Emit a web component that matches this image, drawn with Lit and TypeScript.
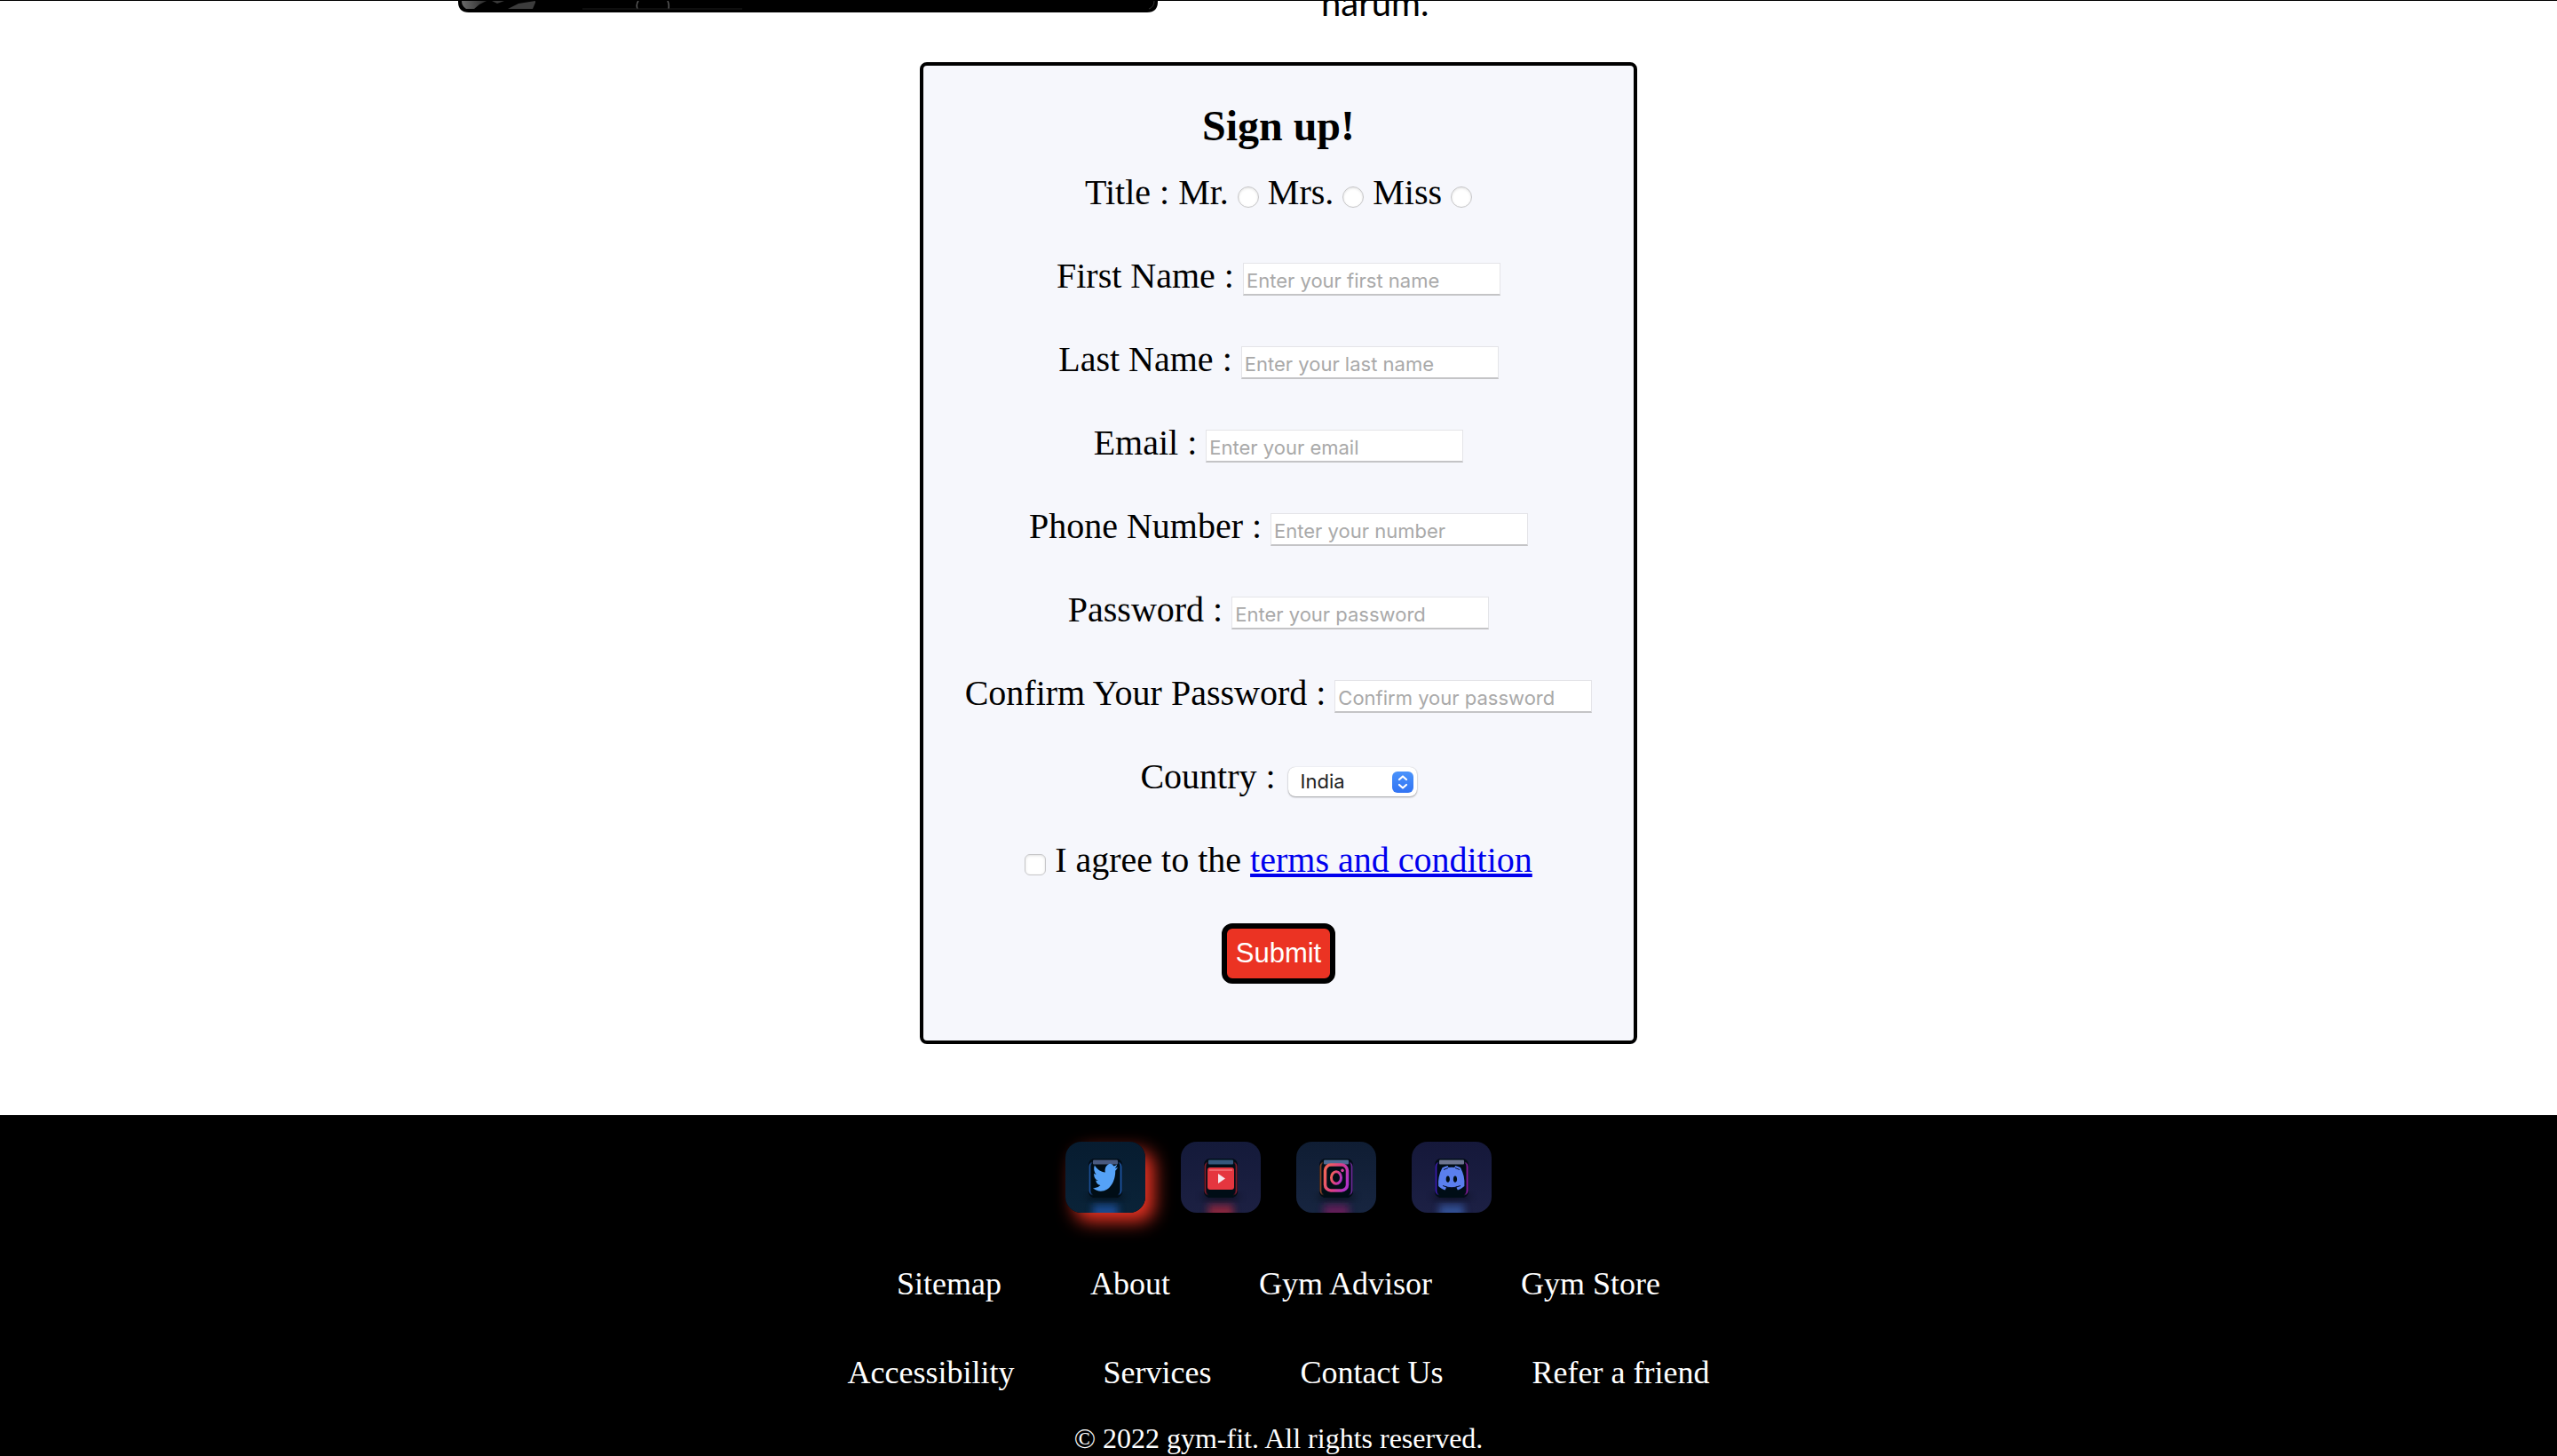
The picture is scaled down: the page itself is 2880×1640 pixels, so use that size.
import { LitElement, html, svg, css } from "lit";
import { customElement, property } from "lit/decorators.js";

interface Field {
  id: string;
  label: string;
  type: string;
  placeholder: string;
}

const FIELDS: Field[] = [
  { id: "first-name", label: "First Name :", type: "text", placeholder: "Enter your first name" },
  { id: "last-name", label: "Last Name :", type: "text", placeholder: "Enter your last name" },
  { id: "email", label: "Email :", type: "email", placeholder: "Enter your email" },
  { id: "phone", label: "Phone Number :", type: "tel", placeholder: "Enter your number" },
  { id: "password", label: "Password :", type: "password", placeholder: "Enter your password" },
  { id: "confirm", label: "Confirm Your Password :", type: "password", placeholder: "Confirm your password" },
];

const TITLES = ["Mr.", "Mrs.", "Miss"];

const LINK_ROWS = [
  ["Sitemap", "About", "Gym Advisor", "Gym Store"],
  ["Accessibility", "Services", "Contact Us", "Refer a friend"],
];

interface Tile {
  name: string;
  top: string;
  bottom: string;
  edgeLeft: string;
  edgeRight: string;
  glow: string;
  glass: string;
}

const TILES: Tile[] = [
  { name: "Twitter", top: "#071c30", bottom: "#0a2338", edgeLeft: "#1c4f96", edgeRight: "#1f57a5", glow: "#1d4f9a", glass: "#4a5a80" },
  { name: "YouTube", top: "#141a3a", bottom: "#1c2042", edgeLeft: "#7d1a2c", edgeRight: "#7d1a2c", glow: "#94263c", glass: "#34587c" },
  { name: "Instagram", top: "#0f1d33", bottom: "#172540", edgeLeft: "#8a4426", edgeRight: "#6a2a96", glow: "#6b1d5c", glass: "#4d6a92" },
  { name: "Discord", top: "#15183a", bottom: "#1c2044", edgeLeft: "#3d1fb0", edgeRight: "#8a1fa0", glow: "#34559c", glass: "#6d7490" },
];

const GLYPHS: Record<string, unknown> = {
  Twitter: svg`<path fill="#55a2f7" transform="translate(31 21.5) scale(1.17 1.57)"
    d="M23.95 4.57a10 10 0 0 1-2.82.78 4.96 4.96 0 0 0 2.16-2.73c-.95.56-2 .96-3.13 1.18a4.92 4.92 0 0 0-8.38 4.48C7.69 8.1 4.07 6.13 1.64 3.16a4.92 4.92 0 0 0 1.52 6.57 4.9 4.9 0 0 1-2.23-.61v.06a4.92 4.92 0 0 0 3.95 4.83 5 5 0 0 1-2.21.08 4.94 4.94 0 0 0 4.6 3.42A9.87 9.87 0 0 1 0 19.54a14 14 0 0 0 7.55 2.21c9.05 0 14-7.5 14-13.98 0-.21 0-.42-.02-.63a9.94 9.94 0 0 0 2.46-2.55z"/>`,
  YouTube: svg`
    <rect x="30" y="29" width="30" height="25" rx="3" fill="#e5363f"/>
    <rect x="32" y="31" width="26" height="2" fill="#f0656b"/>
    <path d="M42 36l8 5.5-8 5.5z" fill="#f6e6ec"/>`,
  Instagram: svg`
    <g fill="none" stroke="url(#insta)">
      <rect x="32.500" y="26" width="25" height="29" rx="6.500" stroke-width="3.500"/>
      <ellipse cx="45" cy="40.500" rx="5.500" ry="6.800" stroke-width="3"/>
    </g>
    <ellipse cx="52" cy="32.300" rx="1.700" ry="1.900" fill="#d6409c"/>`,
  Discord: svg`<path fill="#5a7fee" transform="translate(30 22.8) scale(1.24 1.5)"
    d="M20.320 4.370a19.800 19.800 0 0 0-4.890-1.520.07.07 0 0 0-.08.04c-.21.38-.44.86-.61 1.250a18.270 18.270 0 0 0-5.490 0c-.16-.39-.4-.87-.62-1.250a.08.08 0 0 0-.08-.04 19.740 19.740 0 0 0-4.880 1.520C.53 9.050-.32 13.580.1 18.060c1.800 1.320 3.800 2.400 5.990 3.030.5-.7.900-1.300 1.230-1.990a13.100 13.100 0 0 1-1.870-.9l.37-.29a14.200 14.200 0 0 0 12.120 0l.37.29c-.6.35-1.200.65-1.870.9.36.7.770 1.360 1.230 1.990a19.840 19.840 0 0 0 6.020-3.030c.5-5.180-.84-9.680-3.550-13.690zM8.700 15.330c-1 0-1.700-1.080-1.700-2.420 0-1.330.7-2.420 1.700-2.420s1.700 1.100 1.700 2.420c0 1.340-.7 2.420-1.700 2.420zm6.600 0c-1 0-1.700-1.080-1.700-2.420 0-1.330.7-2.420 1.700-2.420s1.700 1.100 1.700 2.420c0 1.340-.7 2.420-1.700 2.420z"/>
    <path d="M35 49.500q10 4.500 20 0M36 31.500l5-2M54 31.500l-5-2" fill="none" stroke="#0a1233" stroke-width="1"/>`,
};

@customElement("social-tile")
export class SocialTile extends LitElement {
  @property({ attribute: false }) tile!: Tile;

  static styles = css`
    :host { display: block; }
    .art { display: block; width: 90px; height: 80px; }
  `;

  render() {
    const t = this.tile;
    return html`<svg class="art" viewBox="0 0 90 80" aria-hidden="true">
      <defs>
        <linearGradient id="bg" x1="0" y1="0" x2="0" y2="1">
          <stop offset="0" stop-color=${t.top} /><stop offset="1" stop-color=${t.bottom} />
        </linearGradient>
        <linearGradient id="edge" x1="0" y1="0" x2="1" y2="0">
          <stop offset="0" stop-color=${t.edgeLeft} /><stop offset="0.1" stop-color="#030a16" />
          <stop offset="0.9" stop-color="#030a16" /><stop offset="1" stop-color=${t.edgeRight} />
        </linearGradient>
        <linearGradient id="insta" x1="0" y1="0.3" x2="1" y2="0.7">
          <stop offset="0" stop-color="#f0625a" /><stop offset="0.5" stop-color="#dc3f86" />
          <stop offset="1" stop-color="#b032c8" />
        </linearGradient>
        <filter id="soft" x="-60%" y="-60%" width="220%" height="220%"><feGaussianBlur stdDeviation="4" /></filter>
        <filter id="fine" x="-20%" y="-20%" width="140%" height="140%"><feGaussianBlur stdDeviation="0.6" /></filter>
      </defs>
      <rect width="90" height="80" fill="url(#bg)" />
      <rect x="31" y="71" width="28" height="18" fill=${t.glow} opacity="0.9" filter="url(#soft)" />
      <ellipse cx="45" cy="62" rx="22" ry="3" fill="#020611" opacity="0.7" filter="url(#soft)" />
      <rect x="26" y="19" width="38" height="44" rx="7" fill="#020812" filter="url(#fine)" />
      <rect x="27.500" y="23" width="35" height="37" rx="5" fill="none" stroke="url(#edge)" stroke-width="2" filter="url(#fine)" />
      <rect x="31" y="20.500" width="28" height="5" rx="1" fill=${t.glass} filter="url(#fine)" />
      ${GLYPHS[t.name]}
    </svg>`;
  }
}

@customElement("app-root")
export class AppRoot extends LitElement {
  static styles = css`
    :host {
      display: flex;
      flex-direction: column;
      min-height: 100vh;
      background: #fff;
      color: #000;
      font-family: "Liberation Serif", "Times New Roman", serif;
      font-size: 40px;
      line-height: 46px;
    }
    .intro {
      display: grid;
      grid-template-columns: 788px 876px;
      justify-content: center;
      column-gap: 184px;
      height: 30px;
      border-top: 1px solid #000;
      overflow: hidden;
      box-sizing: border-box;
    }
    .photo { display: block; width: 100%; height: 13px; }
    .copy {
      display: flex;
      align-items: flex-end;
      height: 24px;
      margin: 0;
      font-family: Lato, sans-serif;
      line-height: 44px;
    }
    .signup {
      box-sizing: border-box;
      width: fit-content;
      margin: 40px auto 80px;
      padding: 40px 47px 64px;
      background: #f6f7fc;
      border: 4px solid #000;
      border-radius: 8px;
      text-align: center;
    }
    .heading { margin: 0; font-size: 48px; line-height: 56px; font-weight: 700; }
    .row { margin: 0 0 48px; padding: 0; border: 0; }
    .heading + .row { margin-top: 24px; }
    .text {
      box-sizing: border-box;
      width: 290px;
      height: 37px;
      padding: 4px 3px 0;
      border: 1px solid #e4e4e8;
      border-bottom: 2px solid #c4c4c6;
      border-radius: 0;
      background: #fff;
      font: 22px/30px Inter, sans-serif;
      color: #000;
    }
    .text::placeholder { color: #a9a9a9; opacity: 1; }
    .tick {
      appearance: none;
      box-sizing: border-box;
      width: 24px;
      height: 24px;
      margin: 0;
      border: 1px solid #c6c6c8;
      background: #fff;
      box-shadow: inset 0 1px 3px rgba(0, 0, 0, 0.12);
      vertical-align: -4px;
    }
    .tick[type="radio"] { border-radius: 50%; }
    .tick[type="checkbox"] { border-radius: 6px; }
    .picker { position: relative; display: inline-flex; margin-left: 4px; }
    .select {
      appearance: none;
      box-sizing: border-box;
      width: 145px;
      height: 33px;
      padding: 0 40px 0 14px;
      border: 0;
      border-radius: 8px;
      background: #fff;
      box-shadow: 0 1px 2px rgba(0, 0, 0, 0.35), 0 0 1px rgba(0, 0, 0, 0.2);
      font: 22px/33px Inter, sans-serif;
      color: #222;
    }
    .arrows { position: absolute; right: 4px; top: 50%; margin-top: -12px; width: 24px; height: 24px; pointer-events: none; }
    .terms { color: #0000ee; text-decoration: underline; }
    .submit {
      display: block;
      margin: 0 auto;
      padding: 8px 10px;
      border: 6px solid #000;
      border-radius: 12px;
      background: #eb3323;
      color: #fff;
      font: 31px/40px "Liberation Sans", Arial, sans-serif;
    }
    .footer { flex: 1; background: #000; color: #fff; padding: 30px 0 0; text-align: center; }
    .socials { display: flex; justify-content: center; gap: 40px; margin-bottom: 60px; }
    .social { display: block; border-radius: 18px; overflow: hidden; }
    .social.lit { box-shadow: 10px 10px 20px #eb3323; }
    .links { display: flex; justify-content: center; gap: 100px; margin-bottom: 60px; font-size: 36px; line-height: 40px; }
    .link { color: #fff; text-decoration: none; }
    .legal { margin: -24px 0 0; font-size: 32px; line-height: 36px; }
  `;

  render() {
    return html`
      <section class="intro">
        <svg class="photo" viewBox="0 0 788 13" preserveAspectRatio="none" aria-hidden="true">
          <defs>
            <linearGradient id="haze" x1="0" y1="0" x2="1" y2="0">
              <stop offset="0" stop-color="#6a6a6a" /><stop offset="1" stop-color="#2a2a2a" />
            </linearGradient>
          </defs>
          <path d="M0 -12H788V1Q788 13 776 13H12Q0 13 0 1Z" fill="#000" />
          <path d="M4 0H32L24 4L18 9H9Q4 6 4 0Z" fill="url(#haze)" />
          <path d="M38 0H52L44 3Z" fill="#3a3a3a" />
          <path d="M56 9L68 3L87 0V2L84 9Z" fill="#3c3c3c" />
          <path d="M202 9Q200 4 203 0M237 9Q238 4 236 0" fill="none" stroke="#5a5a5a" stroke-width="1.500" />
          <path d="M140 9H320" stroke="#1e1e1e" />
          <path d="M784 0Q784 7 778 9" fill="none" stroke="#333" />
        </svg>
        <p class="copy">harum.</p>
      </section>
      <form class="signup">
        <h2 class="heading">Sign up!</h2>
        <div class="row" role="radiogroup" aria-labelledby="title-label">
          <span id="title-label">Title :</span>
          ${TITLES.map((t, i) => html`<label for="title-${i}">${t}</label> <input class="tick" type="radio" name="title" id="title-${i}" /> `)}
        </div>
        ${FIELDS.map(
          (f) => html`<div class="row">
            <label for=${f.id}>${f.label}</label>
            <input class="text" id=${f.id} type=${f.type} placeholder=${f.placeholder} />
          </div>`,
        )}
        <div class="row">
          <label for="country">Country :</label>
          <span class="picker"><select class="select" id="country"><option>India</option></select><svg class="arrows" viewBox="0 0 24 24" aria-hidden="true">
            <defs><linearGradient id="blue" x1="0" y1="0" x2="0" y2="1"><stop offset="0" stop-color="#4a93fb" /><stop offset="1" stop-color="#3173f3" /></linearGradient></defs>
            <rect width="24" height="24" rx="6" fill="url(#blue)" />
            <path d="M8 9l4-3.500 4 3.500M8 15l4 3.500 4-3.500" fill="none" stroke="#fff" stroke-width="2.200" stroke-linecap="round" stroke-linejoin="round" />
          </svg></span>
        </div>
        <div class="row">
          <input class="tick" type="checkbox" id="agree" />
          <label for="agree">I agree to the</label> <a class="terms" href="#terms">terms and condition</a>
        </div>
        <button class="submit" type="button">Submit</button>
      </form>
      <footer class="footer">
        <div class="socials">
          ${TILES.map(
            (t, i) => html`<a class="social ${i === 0 ? "lit" : ""}" href="#${t.name.toLowerCase()}" aria-label=${t.name}><social-tile .tile=${t}></social-tile></a>`,
          )}
        </div>
        ${LINK_ROWS.map(
          (row) => html`<nav class="links">${row.map((l) => html`<a class="link" href="#">${l}</a>`)}</nav>`,
        )}
        <p class="legal">© 2022 gym-fit. All rights reserved.</p>
      </footer>
    `;
  }
}
